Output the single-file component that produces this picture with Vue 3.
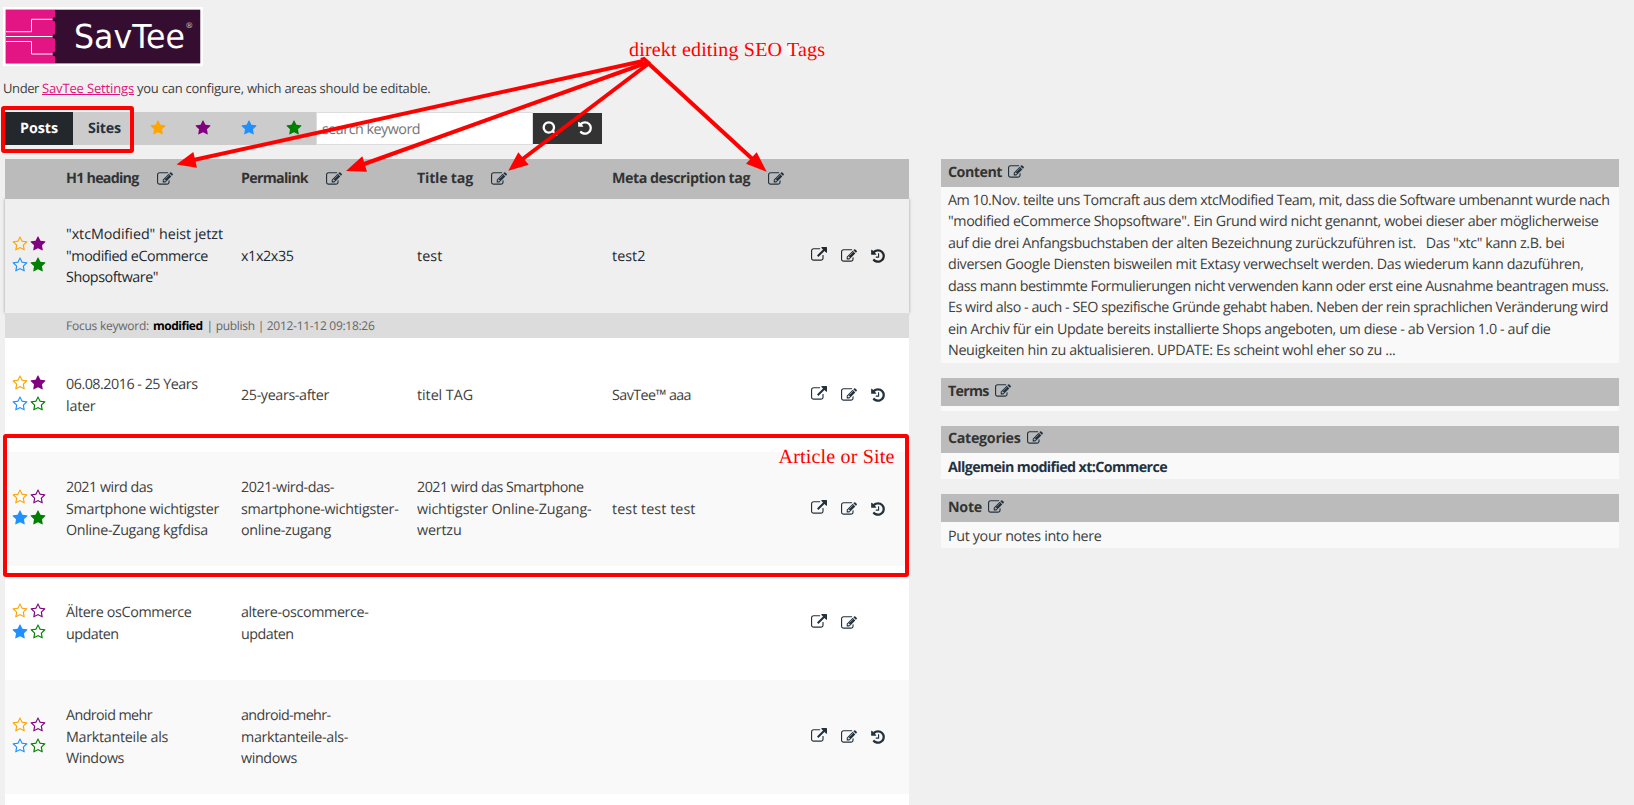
<script setup>
const glyphs = {
  star: 'M1728 647q0 22-26 48l-363 354 86 500q1 7 1 20 0 21-10.5 35.5t-30.5 14.5q-19 0-40-12l-449-236-449 236q-22 12-40 12-21 0-31.5-14.5t-10.5-35.5q0-6 2-20l86-500-364-354q-25-27-25-48 0-37 56-46l502-73 225-455q19-41 49-41t49 41l225 455 502 73q56 9 56 46z',
  starO: 'M1201 1004l306-297-422-62-189-382-189 382-422 62 306 297-73 421 378-199 377 199zm527-357q0 22-26 48l-363 354 86 500q1 7 1 20 0 50-41 50-19 0-40-12l-449-236-449 236q-22 12-40 12-21 0-31.5-14.5t-10.5-35.5q0-6 2-20l86-500-364-354q-25-27-25-48 0-37 56-46l502-73 225-455q19-41 49-41t49 41l225 455 502 73q56 9 56 46z',
  edit: 'M888 1184l116-116-152-152-116 116v56h96v96h56zm440-720q-16-16-33 1l-350 350q-17 17-1 33t33-1l350-350q17-17 1-33zm80 594v190q0 119-84.5 203.5t-203.5 84.5h-832q-119 0-203.5-84.5t-84.5-203.5v-832q0-119 84.5-203.5t203.5-84.5h832q63 0 117 25 15 7 18 23 3 17-9 29l-49 49q-14 14-32 8-23-6-45-6h-832q-66 0-113 47t-47 113v832q0 66 47 113t113 47h832q66 0 113-47t47-113v-126q0-13 9-22l64-64q15-15 35-7t20 29zm-96-738l288 288-672 672h-288v-288zm444 132l-92 92-288-288 92-92q28-28 68-28t68 28l152 152q28 28 28 68t-28 68z',
  link: 'M1408 928v320q0 119-84.5 203.5t-203.5 84.5h-832q-119 0-203.5-84.5t-84.5-203.5v-832q0-119 84.5-203.5t203.5-84.5h704q14 0 23 9t9 23v64q0 14-9 23t-23 9h-704q-66 0-113 47t-47 113v832q0 66 47 113t113 47h832q66 0 113-47t47-113v-320q0-14 9-23t23-9h64q14 0 23 9t9 23zm384-864v512q0 26-19 45t-45 19-45-19l-176-176-652 652q-10 10-23 10t-23-10l-114-114q-10-10-10-23t10-23l652-652-176-176q-19-19-19-45t19-45 45-19h512q26 0 45 19t19 45z',
  undo: 'M1664 896q0 156-61 298t-164 245-245 164-298 61q-172 0-327-72.5t-264-204.5q-7-10-6.5-22.5t8.5-20.5l137-138q10-9 25-9 16 2 23 12 73 95 179 147t225 52q104 0 198.5-40.5t163.5-109.5 109.5-163.5 40.5-198.5-40.5-198.5-109.5-163.5-163.5-109.5-198.5-40.5q-98 0-188 35.5t-160 101.5l137 138q31 30 14 69-17 40-59 40h-448q-26 0-45-19t-19-45v-448q0-42 40-59 39-17 69 14l130 129q107-101 244.5-156.5t284.5-55.5q156 0 298 61t245 164 164 245 61 298z',
  search: 'M1216 832q0-185-131.5-316.5t-316.5-131.5-316.5 131.5-131.5 316.5 131.5 316.5 316.5 131.5 316.5-131.5 131.5-316.5zm512 832q0 52-38 90t-90 38q-54 0-90-38l-343-342q-179 124-399 124-143 0-273.5-55.5t-225-150-150-225-55.5-273.5 55.5-273.5 150-225 225-150 273.5-55.5 273.5 55.5 225 150 150 225 55.5 273.5q0 220-124 399l343 343q37 37 37 90z'
}
glyphs.history = glyphs.undo + 'M1024 608v448q0 14-9 23t-23 9h-320q-14 0-23-9t-9-23v-64q0-14 9-23t23-9h224v-352q0-14 9-23t23-9h64q14 0 23 9t9 23z'

// Tracks a line of text so that it takes the given width in pixels.
const vFit = {
  mounted(el, { value }) {
    const natural = el.getBoundingClientRect().width
    el.style.letterSpacing = (value - natural) / el.textContent.length + 'px'
  }
}

const colours = ['orange', 'purple', 'blue', 'green']

const heads = [
  ['H1 heading', 72.5],
  ['Permalink', 67],
  ['Title tag', 56],
  ['Meta description tag', 138]
]

const rows = [
  {
    stars: [0, 1, 0, 1], active: true, history: true,
    cells: [
      [['"xtcModified" heist jetzt', 157], ['"modified eCommerce', 142], ['Shopsoftware"', 92]],
      [['x1x2x35', 52.5]],
      [['test', 25.5]],
      [['test2', 33.5]]
    ]
  },
  {
    stars: [0, 1, 0, 0], history: true,
    cells: [
      [['06.08.2016 - 25 Years', 131.5], ['later', 29.5]],
      [['25-years-after', 88]],
      [['titel TAG', 56]],
      [['SavTee™ aaa', 79]]
    ]
  },
  {
    stars: [0, 0, 1, 1], alt: true, history: true,
    cells: [
      [['2021 wird das', 86.5], ['Smartphone wichtigster', 153], ['Online-Zugang kgfdisa', 142]],
      [['2021-wird-das-', 93], ['smartphone-wichtigster-', 157.5], ['online-zugang', 90]],
      [['2021 wird das Smartphone', 166.5], ['wichtigster Online-Zugang-', 174.5], ['wertzu', 44.5]],
      [['test test test', 83.5]]
    ]
  },
  {
    stars: [0, 0, 1, 0],
    cells: [
      [['Ältere osCommerce', 125.5], ['updaten', 52.5]],
      [['altere-oscommerce-', 127.5], ['updaten', 52.5]],
      [], []
    ]
  },
  {
    stars: [0, 0, 0, 0], alt: true, history: true,
    cells: [
      [['Android mehr', 86], ['Marktanteile als', 102], ['Windows', 58]],
      [['android-mehr-', 89.5], ['marktanteile-als-', 107], ['windows', 56]],
      [], []
    ]
  }
]

const content = [
  ['Am 10.Nov. teilte uns Tomcraft aus dem xtcModified Team, mit, dass die Software umbenannt wurde nach', 661.5],
  ['"modified eCommerce Shopsoftware". Ein Grund wird nicht genannt, wobei dieser aber möglicherweise', 650.5],
  ['auf die drei Anfangsbuchstaben der alten Bezeichnung zurückzuführen ist. \u00a0 Das "xtc" kann z.B. bei', 616.5],
  ['diversen Google Diensten bisweilen mit Extasy verwechselt werden. Das wiederum kann dazuführen,', 635.5],
  ['dass mann bestimmte Formulierungen nicht verwenden kann oder erst eine Ausnahme beantragen muss.', 660.5],
  ['Es wird also - auch - SEO spezifische Gründe gehabt haben. Neben der rein sprachlichen Veränderung wird', 660],
  ['ein Archiv für ein Update bereits installierte Shops angeboten, um diese - ab Version 1.0 - auf die', 602.5],
  ['Neuigkeiten hin zu aktualisieren. UPDATE: Es scheint wohl eher so zu ...', 447.5]
]

const panels = [
  { id: 'content', title: 'Content', width: 54, lines: content },
  { id: 'terms', title: 'Terms', width: 40.5, lines: [] },
  { id: 'categories', title: 'Categories', width: 72.5, lines: [['Allgemein modified xt:Commerce', 219]] },
  { id: 'note', title: 'Note', width: 34, lines: [['Put your notes into here', 153.5]] }
]

const arrows = [
  { from: '643,61', to: '190,160.8', head: '176.5,164.5 193.3,152 197,167.7' },
  { from: '646,63', to: '360,165.5', head: '346,171 362.3,156.3 367,171.7' },
  { from: '648,64', to: '520,161', head: '508.3,170.7 518.3,152.3 528.7,164.7' },
  { from: '648,63', to: '754,160.5', head: '766.7,171.7 756.7,152.3 746,163.7' }
]
</script>

<template>
  <div class="page">
    <svg class="logo" viewBox="0 0 200 59">
      <rect width="200" height="59" fill="#fff" />
      <rect x="2.7" y="2.2" width="194.5" height="54.8" fill="#b994ad" />
      <rect x="2.7" y="3" width="49.5" height="53" fill="#e31584" />
      <rect x="52" y="3" width="145.2" height="53" fill="#350d31" />
      <g fill="none" stroke="#fff" stroke-width="1">
        <path d="M3 24.7H28.5V12.3H50M3 29.5H50M3 34.5H28.5V47H50" />
      </g>
      <g fill="#350d31">
        <circle cx="51.7" cy="12.2" r="2.2" />
        <circle cx="51.7" cy="29.5" r="2.2" />
        <circle cx="51.7" cy="47" r="2.2" />
      </g>
      <text class="brand" x="71" y="41" textLength="111" lengthAdjust="spacingAndGlyphs">SavTee</text>
      <text class="reg" x="182.2" y="20.5">®</text>
    </svg>

    <p class="intro">
      <span v-fit="36">Under</span><a v-fit="92">SavTee Settings</a><span v-fit="293.5">you can configure, which areas should be editable.</span>
    </p>

    <div class="toolbar">
      <div class="tab on"><span v-fit="38">Posts</span></div>
      <div class="tab"><span v-fit="33">Sites</span></div>
      <div class="filters">
        <svg v-for="c in colours" :key="c" class="icon" :class="c" viewBox="0 0 1792 1792"><path :d="glyphs.star" /></svg>
      </div>
      <div class="search"><span v-fit="98">search keyword</span></div>
      <div class="buttons">
        <svg class="icon" viewBox="0 0 1792 1792"><path :d="glyphs.search" /></svg>
        <svg class="icon" viewBox="0 0 1792 1792"><path :d="glyphs.undo" /></svg>
      </div>
    </div>

    <div class="columns">
      <div class="table">
        <div class="row head">
          <div></div>
          <div v-for="h in heads" :key="h[0]" class="title">
            <span v-fit="h[1]">{{ h[0] }}</span>
            <svg class="icon" viewBox="0 0 1792 1792"><path :d="glyphs.edit" /></svg>
          </div>
        </div>
        <template v-for="(r, i) in rows" :key="i">
          <div class="row" :class="{ active: r.active, alt: r.alt }">
            <div class="stars">
              <svg v-for="(c, k) in colours" :key="c" class="icon" :class="c" viewBox="0 0 1792 1792">
                <path :d="r.stars[k] ? glyphs.star : glyphs.starO" />
              </svg>
            </div>
            <div v-for="(cell, j) in r.cells" :key="j" class="cell">
              <div v-for="line in cell" :key="line[0]" class="line"><span v-fit="line[1]">{{ line[0] }}</span></div>
            </div>
            <div class="actions">
              <svg class="icon up" viewBox="0 0 1792 1792"><path :d="glyphs.link" /></svg>
              <svg class="icon" viewBox="0 0 1792 1792"><path :d="glyphs.edit" /></svg>
              <svg v-if="r.history" class="icon hist" viewBox="0 0 1792 1792"><path :d="glyphs.history" /></svg>
            </div>
          </div>
          <div v-if="r.active" class="focus">
            <span v-fit="83">Focus keyword:</span><b v-fit="49.5">modified</b><span v-fit="168">| publish | 2012-11-12 09:18:26</span>
          </div>
        </template>
        <div class="rest"></div>
      </div>

      <div class="side">
        <section v-for="p in panels" :key="p.id" :class="p.id">
          <h2>
            <span v-fit="p.width">{{ p.title }}</span>
            <svg class="icon" viewBox="0 0 1792 1792"><path :d="glyphs.edit" /></svg>
          </h2>
          <div class="body">
            <div v-for="line in p.lines" :key="line[0]" class="line"><span v-fit="line[1]">{{ line[0] }}</span></div>
          </div>
        </section>
      </div>
    </div>

    <svg class="notes" viewBox="0 0 1634 805">
      <defs>
        <radialGradient id="glow">
          <stop offset="0" stop-color="#fff" />
          <stop offset="1" stop-color="#fff" stop-opacity="0" />
        </radialGradient>
      </defs>
      <rect x="3" y="108" width="129" height="43" rx="1" />
      <rect x="5" y="436" width="902" height="139" rx="1" />
      <g v-for="a in arrows" :key="a.to">
        <polyline :points="a.from + ' ' + a.to" />
        <polygon :points="a.head" />
      </g>
      <path d="M641 60L644 59L649.5 64" />
      <ellipse cx="792" cy="50" rx="11" ry="9" fill="url(#glow)" />
      <text x="629" y="56" textLength="196">direkt editing SEO Tags</text>
      <text x="778.5" y="462.5" textLength="116">Article or Site</text>
    </svg>
  </div>
</template>

<style>
body {
  background: #f0f0f0;
}
</style>

<style scoped>
.page {
  position: relative;
  width: 1634px;
  height: 805px;
  overflow: hidden;
  box-sizing: border-box;
  padding: 7px 0 0 5px;
  background: #f0f0f0;
  color: #3e3e3e;
  font: 14.3px/21.5px "Open Sans", "Noto Sans", sans-serif;
  text-rendering: geometricPrecision;
}
span, a, b {
  display: inline-block;
  white-space: pre;
}
.logo {
  display: block;
  width: 200px;
  height: 59px;
  margin-left: -2px;
}
.brand {
  font: 33px "DejaVu Sans", sans-serif;
  fill: #fff;
}
.reg {
  font: 8px "DejaVu Sans", sans-serif;
  fill: #d8ccd7;
}
.intro {
  display: flex;
  gap: 3px;
  height: 20px;
  margin: 13px 0 13px -2px;
  font-size: 13px;
  line-height: 19px;
}
.intro a {
  color: #e0127f;
  text-decoration: underline;
}
.icon {
  display: block;
  flex: none;
  width: 16px;
  height: 16px;
  fill: currentColor;
}
.orange { color: orange; }
.purple { color: purple; }
.blue { color: dodgerblue; }
.green { color: green; }
.toolbar {
  display: flex;
  height: 33px;
}
.tab {
  box-sizing: border-box;
  width: 68px;
  padding: 6px 0 0 15px;
  background: #ccc;
  color: #23323f;
  font-weight: 700;
}
.tab.on {
  background: #23282d;
  color: #fff;
}
.filters {
  display: flex;
  box-sizing: border-box;
  gap: 29.2px;
  width: 175px;
  padding: 7.5px 0 0 9.3px;
  background: #ccc;
}
.search {
  box-sizing: border-box;
  width: 217px;
  height: 33px;
  padding: 5.5px 0 0 5px;
  border: 1px solid #ddd;
  background: #fff;
  color: #757575;
}
.buttons {
  display: flex;
  box-sizing: border-box;
  gap: 19px;
  width: 69px;
  height: 31px;
  margin-top: 1px;
  padding: 7px 0 0 9px;
  background: #333;
  color: #fff;
}
.columns {
  display: flex;
  gap: 32px;
  margin-top: 14px;
}
.table {
  width: 904px;
}
.row {
  display: grid;
  grid-template-columns: 61px 175px 176px 195px 199px 1fr;
  align-items: center;
  height: 114px;
  background: #fff;
}
.row.alt {
  background: #f9f9f9;
}
.row.active {
  background: #efefef;
  color: #23282d;
  box-shadow: 0 0 3px rgba(0, 0, 0, 0.35);
}
.row.head {
  grid-template-columns: 61px 175px 176px 195px 1fr;
  position: relative;
  z-index: 1;
  height: 40px;
  background: #bbb;
  color: #333;
  font-weight: 700;
}
.title {
  display: flex;
  gap: 18px;
}
.title .icon {
  margin-top: 3px;
  color: #23323f;
}
.stars {
  display: grid;
  grid-template-columns: 18px 18px;
  row-gap: 5px;
  padding-left: 6.8px;
  margin-top: -3px;
}
.cell {
  margin-top: 1px;
}
.actions {
  display: flex;
  gap: 14px;
  color: #23323f;
}
.active .actions {
  color: #23282d;
}
.up {
  margin-top: -1px;
}
.hist {
  margin-left: -1px;
}
.line {
  height: 21.5px;
}
.focus {
  display: flex;
  box-sizing: border-box;
  position: relative;
  z-index: 1;
  gap: 4px;
  height: 25px;
  padding: 2px 0 0 61px;
  background: #dcdcdc;
  color: #666;
  font-size: 12px;
}
.focus b {
  color: #000;
}
.rest {
  height: 11px;
  background: #fff;
}
.side {
  width: 678px;
}
section {
  margin-bottom: 15px;
}
h2 {
  display: flex;
  box-sizing: border-box;
  gap: 6px;
  height: 28px;
  margin: 0;
  padding: 3px 7px 0;
  background: #bbb;
  color: #333;
  font-size: 14.3px;
  line-height: 21.5px;
}
h2 .icon {
  margin-top: 2px;
  color: #23323f;
}
.body {
  box-sizing: border-box;
  height: 26px;
  padding: 3.5px 7px 0;
  background: #f9f9f9;
}
.content .body {
  height: 176px;
  padding-top: 2.6px;
}
.terms .body {
  height: 5px;
}
.categories h2 {
  height: 27px;
  padding-top: 2px;
}
.categories .body {
  color: #23323f;
  font-weight: 700;
}
.notes {
  position: absolute;
  top: 0;
  left: 0;
  z-index: 2;
  width: 1634px;
  height: 805px;
  fill: none;
}
.notes rect, .notes polyline, .notes path {
  stroke: red;
  stroke-width: 4;
}
.notes polygon {
  fill: red;
}
.notes text {
  fill: red;
  font: 20px "Liberation Serif", serif;
}
</style>
